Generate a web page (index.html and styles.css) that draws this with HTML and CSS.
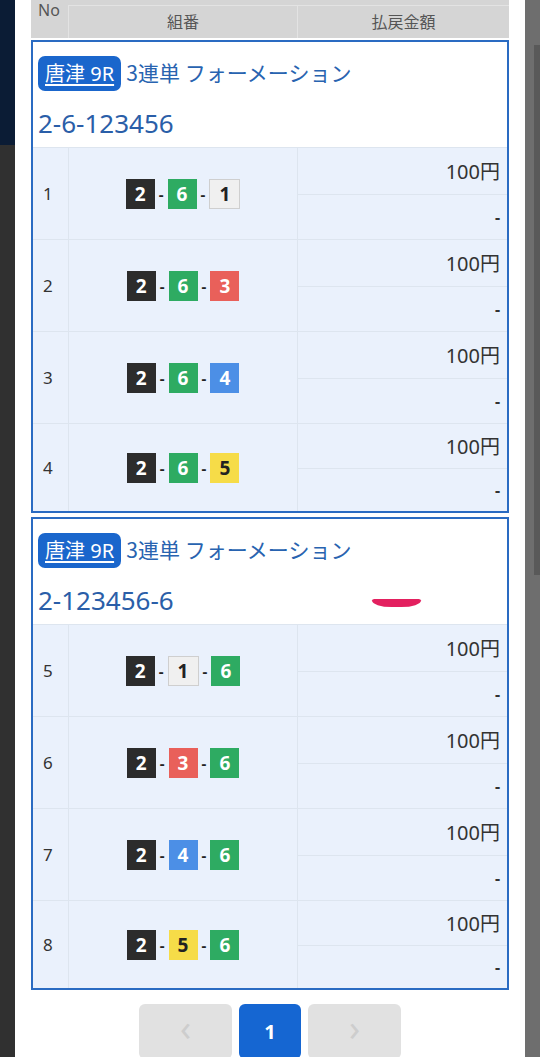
FILE: index.html
```html
<!DOCTYPE html>
<html lang="ja">
<head>
  <meta charset="UTF-8">
  <meta name="viewport" content="width=device-width, initial-scale=1.0">
  <title>投票内容</title>
  <link rel="stylesheet" href="styles.css">
</head>
<body>
  <div class="backdrop">
    <div class="side side-left"><div class="navy"></div></div>

    <div class="modal">
      <div class="table-head">
        <div class="th th-no">No</div>
        <div class="th">組番</div>
        <div class="th">払戻金額</div>
      </div>

      <div class="card">
        <div class="card-head">
          <div class="title"><a class="badge">唐津 9R</a> <span class="bet">3連単 フォーメーション</span></div>
          <div class="formation">2-6-123456</div>
        </div>
        <div class="row">
          <div class="no">1</div>
          <div class="combo"><span class="box b2">2</span>-<span class="box b6">6</span>-<span class="box b1">1</span></div>
          <div class="pay"><div>100円</div><div>-</div></div>
        </div>
        <div class="row">
          <div class="no">2</div>
          <div class="combo"><span class="box b2">2</span>-<span class="box b6">6</span>-<span class="box b3">3</span></div>
          <div class="pay"><div>100円</div><div>-</div></div>
        </div>
        <div class="row">
          <div class="no">3</div>
          <div class="combo"><span class="box b2">2</span>-<span class="box b6">6</span>-<span class="box b4">4</span></div>
          <div class="pay"><div>100円</div><div>-</div></div>
        </div>
        <div class="row">
          <div class="no">4</div>
          <div class="combo"><span class="box b2">2</span>-<span class="box b6">6</span>-<span class="box b5">5</span></div>
          <div class="pay"><div>100円</div><div>-</div></div>
        </div>
      </div>

      <div class="card">
        <div class="card-head">
          <div class="title"><a class="badge">唐津 9R</a> <span class="bet">3連単 フォーメーション</span></div>
          <div class="formation">2-123456-6</div>
          <span class="mark"></span>
        </div>
        <div class="row">
          <div class="no">5</div>
          <div class="combo"><span class="box b2">2</span>-<span class="box b1">1</span>-<span class="box b6">6</span></div>
          <div class="pay"><div>100円</div><div>-</div></div>
        </div>
        <div class="row">
          <div class="no">6</div>
          <div class="combo"><span class="box b2">2</span>-<span class="box b3">3</span>-<span class="box b6">6</span></div>
          <div class="pay"><div>100円</div><div>-</div></div>
        </div>
        <div class="row">
          <div class="no">7</div>
          <div class="combo"><span class="box b2">2</span>-<span class="box b4">4</span>-<span class="box b6">6</span></div>
          <div class="pay"><div>100円</div><div>-</div></div>
        </div>
        <div class="row">
          <div class="no">8</div>
          <div class="combo"><span class="box b2">2</span>-<span class="box b5">5</span>-<span class="box b6">6</span></div>
          <div class="pay"><div>100円</div><div>-</div></div>
        </div>
      </div>

      <div class="pager">
        <button class="page-btn arrow">&lsaquo;</button>
        <button class="page-btn current">1</button>
        <button class="page-btn arrow">&rsaquo;</button>
      </div>
    </div>

    <div class="side side-right"><div class="shade"></div></div>
  </div>
</body>
</html>
```

FILE: styles.css
```css
body {
  margin: 0;
  font-family: "Noto Sans", "Noto Sans CJK JP", sans-serif;
  color: #333;
  overflow: hidden;
}

.backdrop {
  display: grid;
  grid-template-columns: 15px 510px 15px;
  height: 1057px;
}

.side-left {
  background-color: #303030;
}

.navy {
  height: 145px;
  background-color: #0b1c35;
}

.side-right {
  background-color: #6e6e6e;
  padding-top: 45px;
}

.shade {
  margin-left: 9px;
  height: 530px;
  background-color: #595959;
}

.modal {
  background-color: #fff;
  padding: 0 16px;
  overflow: hidden;
}

/* table header, scrolled half out of view */
.table-head {
  display: grid;
  grid-template-columns: 37px 229px 1fr;
  height: 38px;
  background-color: #d5d5d5;
}

.th {
  border-left: 1px solid #e3e3e3;
  border-top: 1px solid #e3e3e3;
  margin-top: 5px;
  text-align: center;
  font-size: 16px;
  line-height: 32px;
  color: #555;
}

.th-no {
  border: none;
  margin-top: 0;
  text-align: left;
  padding-left: 7px;
  line-height: 20px;
}

.card {
  border: 2px solid #2a6bc2;
  margin-top: 2px;
  margin-bottom: 4px;
}

.card-head {
  position: relative;
  height: 105px;
  padding: 13px 5px 0;
  box-sizing: border-box;
  background-color: #fff;
}

.title {
  font-size: 20px;
  line-height: 35px;
  color: #2863b0;
  white-space: nowrap;
}

.bet {
  font-family: "Noto Sans CJK JP", sans-serif;
  font-size: 21px;
}

.badge {
  display: inline-block;
  background-color: #1a66cc;
  color: #fff;
  text-decoration: underline;
  text-underline-offset: 3px;
  padding: 0 7px;
  border-radius: 7px;
  line-height: 35px;
}

.formation {
  margin-top: 17px;
  font-size: 26px;
  line-height: 30px;
  color: #2a5ea8;
}

.mark {
  position: absolute;
  left: 339px;
  top: 80px;
  width: 49px;
  height: 8px;
  background-color: #e3205f;
  border-radius: 3px 3px 50% 50% / 2px 2px 100% 100%;
}

.row {
  display: grid;
  grid-template-columns: 35px 229px 1fr;
  height: 92px;
  box-sizing: border-box;
  border-top: 1px solid #dde5ef;
  background-color: #eaf1fc;
}

.row:last-child {
  height: 88px;
}

.no {
  display: flex;
  align-items: center;
  padding-left: 10px;
  font-size: 17px;
}

.combo {
  display: flex;
  align-items: center;
  justify-content: center;
  gap: 4px;
  border-left: 1px solid #dde5ef;
  font-size: 15px;
  font-weight: bold;
  color: #222;
}

.box {
  display: inline-block;
  width: 29px;
  height: 30px;
  line-height: 30px;
  text-align: center;
  font-size: 19px;
  font-weight: bold;
  color: #fff;
  box-sizing: border-box;
}

.b1 { background-color: #f0f0f0; color: #222; border: 1px solid #cfcfcf; line-height: 28px; width: 31px; }
.b2 { background-color: #2c2c2c; }
.b3 { background-color: #e9605a; }
.b4 { background-color: #4c8fe6; }
.b5 { background-color: #f6dc48; color: #222; }
.b6 { background-color: #2eab62; }

.pay {
  display: grid;
  grid-template-rows: 1fr 1fr;
  border-left: 1px solid #dde5ef;
  font-size: 20px;
  text-align: right;
}

.pay div {
  display: flex;
  align-items: center;
  justify-content: flex-end;
  padding-right: 7px;
}

.pay div + div {
  border-top: 1px solid #dde5ef;
  font-weight: bold;
  font-size: 16px;
}

.pager {
  display: flex;
  justify-content: center;
  gap: 7px;
  margin-top: 14px;
}

.page-btn {
  width: 93px;
  height: 55px;
  border: none;
  border-radius: 6px;
  background-color: #e1e1e1;
  color: #cdcdcd;
  font-family: inherit;
  font-size: 36px;
  line-height: 40px;
  padding: 0 0 8px;
}

.page-btn.current {
  width: 62px;
  background-color: #1566d2;
  color: #fff;
  font-size: 20px;
  font-weight: bold;
  padding: 0;
}
```
